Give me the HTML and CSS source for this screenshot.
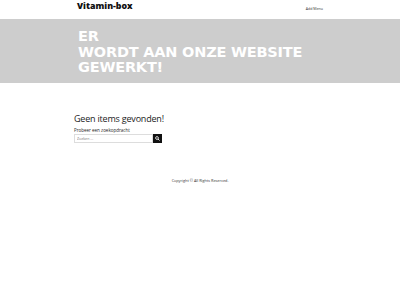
FILE: index.html
```html
<!DOCTYPE html>
<html lang="nl">
<head>
    <meta charset="UTF-8">
    <meta name="viewport" content="width=device-width, initial-scale=1.0">
    <title>Vitamin-box</title>
    <link rel="stylesheet" href="styles.css">
</head>
<body>

    <header class="site-header">
        <div class="container header-inner">
            <a class="logo" href="#">Vitamin-box</a>
            <nav class="menu"><a href="#">Add Menu</a></nav>
        </div>
    </header>

    <section class="hero">
        <div class="container">
            <h1>ER<br>WORDT AAN ONZE WEBSITE<br>GEWERKT!</h1>
        </div>
    </section>

    <main class="container content">
        <h2>Geen items gevonden!</h2>
        <p>Probeer een zoekopdracht</p>
        <form class="search">
            <input type="text" placeholder="Zoeken ...">
            <button type="button">
                <svg width="5" height="5" viewBox="0 0 10 10">
                    <circle cx="4" cy="4" r="2.8" fill="none" stroke="#fff" stroke-width="1.6"/>
                    <line x1="6" y1="6" x2="9" y2="9" stroke="#fff" stroke-width="1.8"/>
                </svg>
            </button>
        </form>
    </main>

    <footer class="site-footer">
        <p>Copyright &copy; All Rights Reserved.</p>
    </footer>

</body>
</html>
```

FILE: styles.css
```css
body {
    font-family: "Open Sans", sans-serif;
    margin: 0;
    padding: 0;
    background-color: #fff;
    color: #222;
}

.container {
    width: 252px;
    margin: 0 auto;
}

.site-header {
    height: 19px;
}

.header-inner {
    display: flex;
    justify-content: space-between;
    align-items: flex-start;
}

.logo {
    font-weight: 800;
    font-size: 8.8px;
    line-height: 12px;
    color: #111;
    text-decoration: none;
    margin: 0 0 0 3px;
}

.menu {
    margin: 7px 3px 0 0;
    font-size: 3.6px;
    line-height: 4px;
}

.menu a {
    color: #333;
    text-decoration: none;
}

.hero {
    background-color: #cdcdcd;
    height: 64px;
    box-sizing: border-box;
    padding-top: 10px;
}

.hero h1 {
    margin: 0 0 0 4px;
    color: #fff;
    font-family: "DejaVu Sans", sans-serif;
    font-size: 14.5px;
    line-height: 15.5px;
    letter-spacing: -0.2px;
    font-weight: 800;
}

.content {
    padding-top: 30px;
}

.content h2 {
    margin: 0;
    font-size: 9px;
    font-weight: normal;
    line-height: 12px;
    letter-spacing: -0.2px;
}

.content p {
    margin: 2px 0 0;
    font-size: 4.5px;
}

.search {
    display: flex;
    margin-top: 1px;
    height: 9px;
}

.search input {
    width: 79px;
    height: 9px;
    box-sizing: border-box;
    border: 1px solid #ddd;
    padding: 0 2px;
    margin: 0;
    font-size: 3.6px;
    font-family: inherit;
}

.search button {
    width: 9px;
    height: 9px;
    border: 0;
    padding: 0;
    margin: 0;
    background: #111;
    display: flex;
    align-items: center;
    justify-content: center;
}

.site-footer {
    text-align: center;
    padding-top: 35px;
}

.site-footer p {
    margin: 0;
    font-size: 3.8px;
    color: #333;
}
```
